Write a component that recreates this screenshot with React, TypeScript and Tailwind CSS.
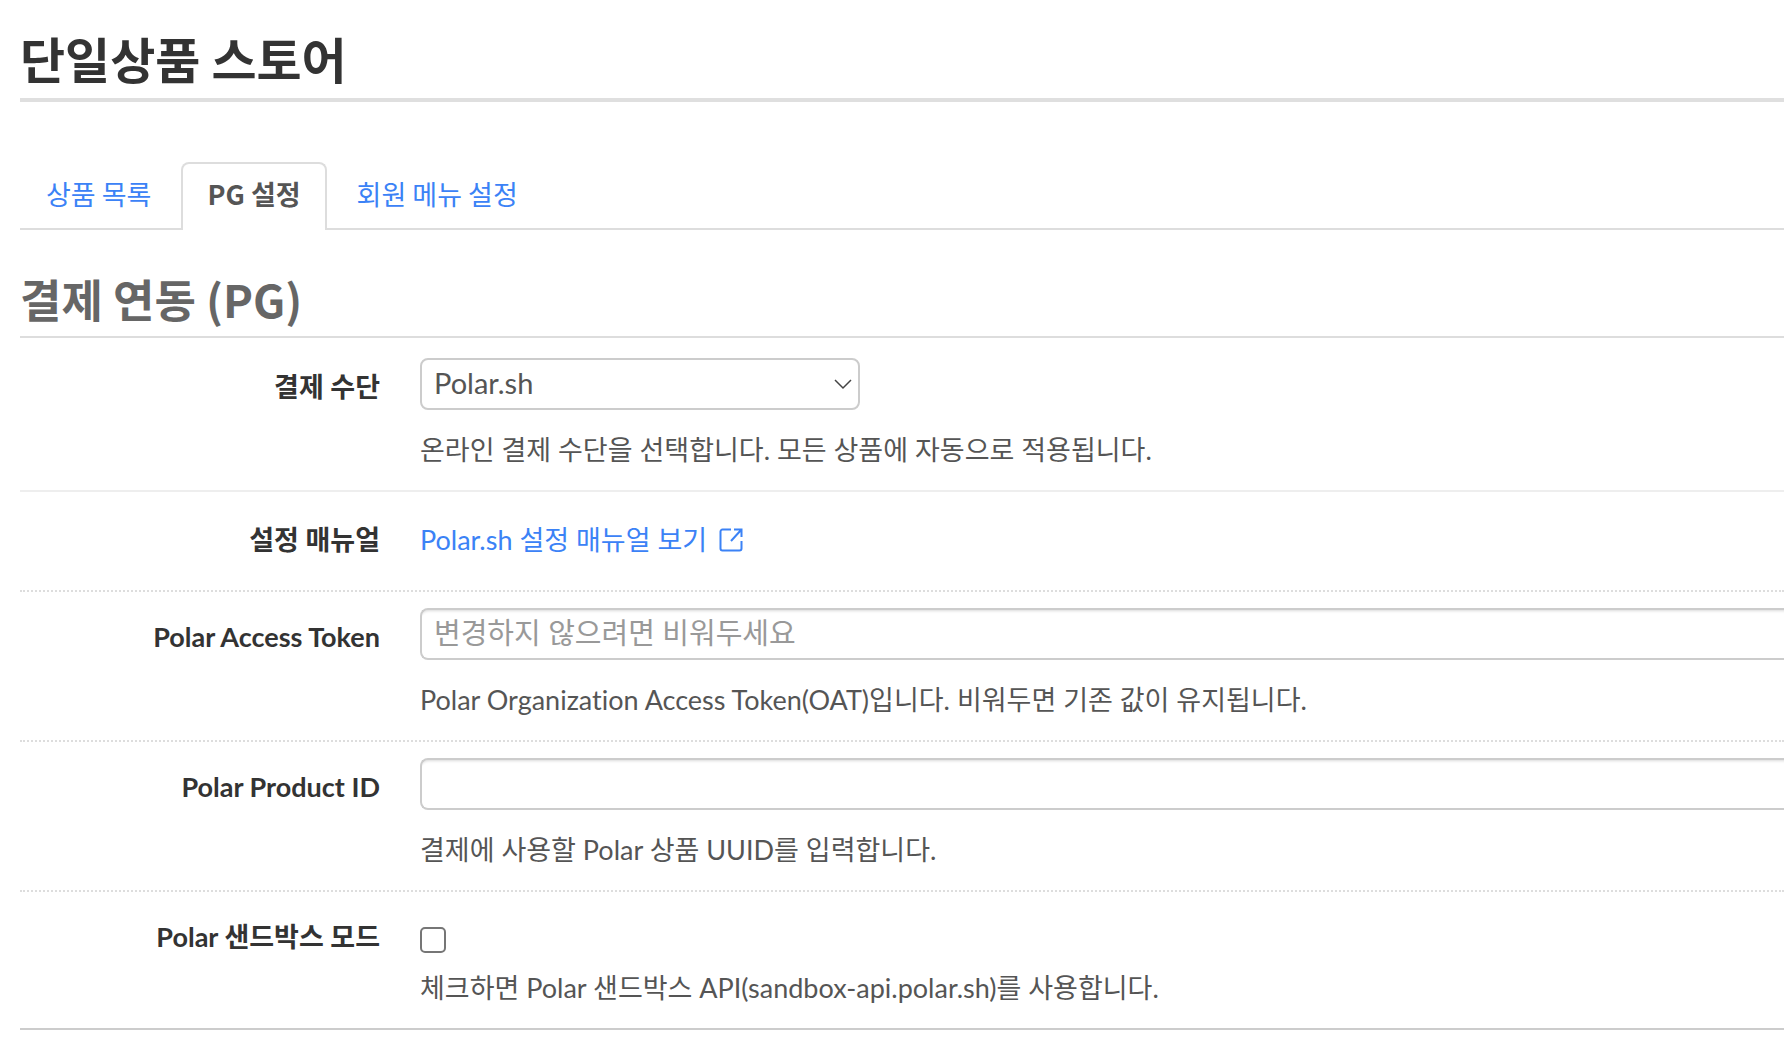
import type { ReactNode } from 'react';

const tabs = [
    { label: '상품 목록', href: '#products', active: false },
    { label: 'PG 설정', href: '#pg', active: true },
    { label: '회원 메뉴 설정', href: '#menus', active: false },
];

const rowClass = 'flex gap-10 border-b-2';
const labelClass =
    'w-[360px] shrink-0 text-right text-[27px] leading-10 font-bold text-[#333]';
const inputClass =
    'block h-[52px] w-full rounded-l-lg border-2 border-r-0 border-[#ccc] bg-white px-3 pb-1 text-[29px] text-[#555] shadow-[inset_0_4px_3px_-3px_rgba(0,0,0,0.15)] placeholder:text-[#999] focus:outline-none';

function Help({ id, children }: { id: string; children: ReactNode }) {
    return (
        <p id={id} className="text-[27px] leading-10 text-[#555]">
            {children}
        </p>
    );
}

function ExternalIcon() {
    return (
        <svg
            className="size-6"
            viewBox="0 0 24 24"
            fill="none"
            stroke="currentColor"
            strokeWidth="2"
            aria-hidden="true"
        >
            <path d="M12 1.5H3.5a2 2 0 0 0-2 2v17a2 2 0 0 0 2 2h17a2 2 0 0 0 2-2V13" />
            <path d="M15 1.5h7.5V9M22.5 1.5 12 13" />
        </svg>
    );
}

export default function App() {
    return (
        <main className="min-h-screen bg-white pl-5 font-['Noto_Sans_CJK_KR',sans-serif]">
            <h1 className="border-b-4 border-[#dfdfdf] pt-[26px] pb-2 text-[49px] leading-[64px] font-bold text-[#333]">
                단일상품 스토어
            </h1>

            <nav className="mt-[60px] flex gap-1 border-b-2 border-[#ddd] text-[27px] leading-10">
                {tabs.map((tab) => (
                    <a
                        key={tab.label}
                        href={tab.href}
                        aria-current={tab.active ? 'page' : undefined}
                        className={
                            tab.active
                                ? '-mb-0.5 rounded-t-lg border-2 border-b-0 border-[#ddd] bg-white px-6 pt-2.5 pb-4 font-bold text-[#555]'
                                : 'border-2 border-b-0 border-transparent px-6 pt-2.5 text-[#3b82f6] hover:underline'
                        }
                    >
                        {tab.label}
                    </a>
                ))}
            </nav>

            <h2 className="mt-10 mb-1 border-b-2 border-[#ddd] pb-2 text-[45px] leading-[58px] font-bold text-[#666]">
                결제 연동 (PG)
            </h2>

            <form className="border-b-2 border-[#ccc] font-[Lato,'Noto_Sans_CJK_KR',sans-serif] [font-variant-ligatures:no-common-ligatures]">
                <div className={`${rowClass} border-solid border-[#eee]`}>
                    <label htmlFor="pg-method" className={`${labelClass} pt-[25px]`}>
                        결제 수단
                    </label>
                    <div className="flex-1 pt-4 pb-5">
                        <div className="relative mb-5 w-[440px]">
                            <select
                                id="pg-method"
                                aria-describedby="pg-method-help"
                                className="block h-[52px] w-full appearance-none rounded-lg border-2 border-[#ccc] bg-white px-3 pb-0.5 text-[29px] text-[#555] focus:outline-none"
                            >
                                <option>Polar.sh</option>
                            </select>
                            <svg
                                className="pointer-events-none absolute top-5 right-2 h-3 w-[18px]"
                                viewBox="0 0 18 12"
                                fill="none"
                                stroke="#444"
                                strokeWidth="1.5"
                                aria-hidden="true"
                            >
                                <path d="m1 2 8 8 8-8" />
                            </svg>
                        </div>
                        <Help id="pg-method-help">
                            온라인 결제 수단을 선택합니다. 모든 상품에 자동으로
                            적용됩니다.
                        </Help>
                    </div>
                </div>

                <div className={`${rowClass} border-dotted border-[#ddd] pt-7 pb-[30px]`}>
                    <span className={labelClass}>설정 매뉴얼</span>
                    <a
                        href="#manual"
                        className="flex items-center gap-3 text-[27px] leading-10 text-[#3b82f6] hover:underline"
                    >
                        Polar.sh 설정 매뉴얼 보기
                        <ExternalIcon />
                    </a>
                </div>

                <div className={`${rowClass} border-dotted border-[#ddd]`}>
                    <label htmlFor="access-token" className={`${labelClass} pt-[25px]`}>
                        Polar Access Token
                    </label>
                    <div className="flex-1 pt-4 pb-5">
                        <input
                            id="access-token"
                            type="text"
                            placeholder="변경하지 않으려면 비워두세요"
                            aria-describedby="access-token-help"
                            className={`${inputClass} mb-5`}
                        />
                        <Help id="access-token-help">
                            Polar Organization Access Token(OAT)입니다. 비워두면
                            기존 값이 유지됩니다.
                        </Help>
                    </div>
                </div>

                <div className={`${rowClass} border-dotted border-[#ddd]`}>
                    <label htmlFor="product-id" className={`${labelClass} pt-[25px]`}>
                        Polar Product ID
                    </label>
                    <div className="flex-1 pt-4 pb-5">
                        <input
                            id="product-id"
                            type="text"
                            aria-describedby="product-id-help"
                            className={`${inputClass} mb-5`}
                        />
                        <Help id="product-id-help">
                            결제에 사용할 Polar 상품 UUID를 입력합니다.
                        </Help>
                    </div>
                </div>

                <div className="flex gap-10">
                    <label htmlFor="sandbox" className={`${labelClass} pt-[25px]`}>
                        Polar 샌드박스 모드
                    </label>
                    <div className="flex-1 pt-[35px] pb-5">
                        <input
                            id="sandbox"
                            type="checkbox"
                            aria-describedby="sandbox-help"
                            className="mb-[15px] block size-[26px] appearance-none rounded-[5px] border-2 border-[#767676] bg-white checked:bg-[#3b82f6]"
                        />
                        <Help id="sandbox-help">
                            체크하면 Polar 샌드박스 API(sandbox-api.polar.sh)를
                            사용합니다.
                        </Help>
                    </div>
                </div>
            </form>
        </main>
    );
}
